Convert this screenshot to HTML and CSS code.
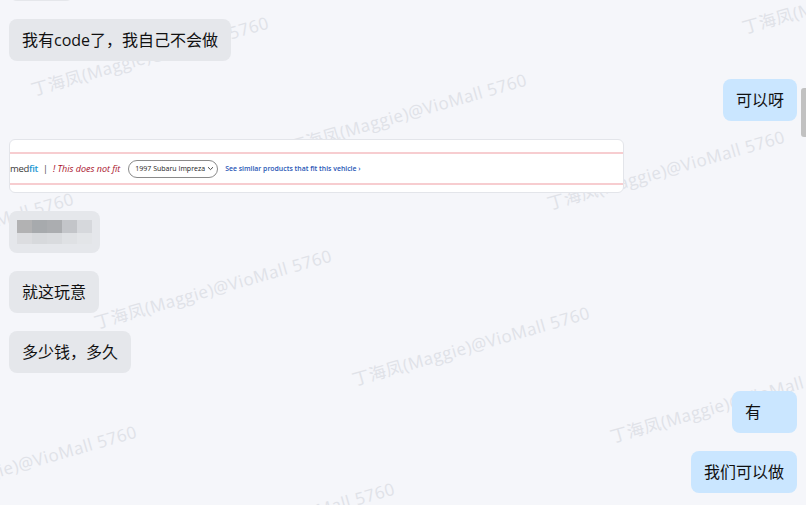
FILE: index.html
```html
<!DOCTYPE html>
<html lang="zh-CN">
<head>
    <meta charset="UTF-8">
    <meta name="viewport" content="width=device-width, initial-scale=1.0">
    <title>聊天记录</title>
    <link rel="stylesheet" href="styles.css">
</head>
<body>
    <div class="watermarks"></div>
    <div class="scroll-thumb"></div>
    <main class="chat">
        <div class="msg"><div class="bubble">嗯</div></div>
        <div class="msg"><div class="bubble">我有code了，我自己不会做</div></div>
        <div class="msg me"><div class="bubble">可以呀</div></div>
        <div class="msg">
            <div class="fit-card">
                <div class="fit-bar">
                    <span class="brand">med<b>fit</b></span>
                    <span class="sep">|</span>
                    <span class="warn">! This does not fit</span>
                    <span class="vehicle">1997 Subaru Impreza <svg width="7" height="5" viewBox="0 0 7 5"><path d="M1 1.2 L3.5 3.6 L6 1.2" fill="none" stroke="#333" stroke-width="0.9"/></svg></span>
                    <span class="similar">See similar products that fit this vehicle ›</span>
                </div>
            </div>
        </div>
        <div class="msg">
            <div class="bubble blurred">
                <div class="mosaic">
                    <i style="background:#b2b2b3"></i><i style="background:#a7aaad"></i><i style="background:#abadb0"></i><i style="background:#c3c5c9"></i><i style="background:#d6d8dc"></i>
                    <i style="background:#dcdde0"></i><i style="background:#d7d9dc"></i><i style="background:#d9dbde"></i><i style="background:#dfe1e4"></i><i style="background:#e3e5e8"></i>
                </div>
            </div>
        </div>
        <div class="msg"><div class="bubble">就这玩意</div></div>
        <div class="msg"><div class="bubble">多少钱，多久</div></div>
        <div class="msg me"><div class="bubble">有</div></div>
        <div class="msg me"><div class="bubble">我们可以做</div></div>
    </main>
    <script>
// Tiled watermark, same step as the chat client draws it
const layer = document.querySelector(".watermarks");
for (let r = -1; r <= 3; r++) {
    for (let c = -2; c <= 3; c++) {
        const x = 34 + 258 * c + 63 * r;
        const y = 97 + 57 * c + 233 * r;
        if (x > 806 || y < -60 || y > 600) continue;
        const mark = document.createElement("span");
        mark.className = "mark";
        mark.textContent = "丁海凤(Maggie)@VioMall 5760";
        mark.style.left = x + "px";
        mark.style.top = (y - 16) + "px";
        layer.appendChild(mark);
    }
}
    </script>
</body>
</html>
```

FILE: styles.css
```css
/* General */
body {
    margin: 0;
    height: 505px;
    overflow: hidden;
    position: relative;
    background-color: #f5f6fa;
    font-family: "Open Sans", "Noto Sans CJK SC", sans-serif;
    color: #111;
}

/* Watermark layer */
.watermarks {
    position: absolute;
    inset: 0;
    overflow: hidden;
    z-index: 0;
}

.mark {
    position: absolute;
    white-space: nowrap;
    font-family: "Open Sans", "Noto Sans CJK SC", sans-serif;
    font-size: 17px;
    line-height: 18px;
    letter-spacing: 0.5px;
    color: #e0e2e8;
    transform-origin: 0 100%;
    transform: rotate(-16deg);
}

.scroll-thumb {
    position: absolute;
    right: 0;
    top: 88px;
    width: 5px;
    height: 49px;
    background-color: #c1c1c1;
    border-radius: 3px 0 0 3px;
    z-index: 2;
}

/* Chat list */
.chat {
    position: relative;
    z-index: 1;
    display: flex;
    flex-direction: column;
    gap: 18px;
    padding: 0 9px;
    margin-top: -41px;
}

.msg {
    display: flex;
}

.msg.me {
    justify-content: flex-end;
}

.bubble {
    box-sizing: border-box;
    min-width: 65px;
    height: 42px;
    padding: 10px 13px;
    font-size: 16px;
    line-height: 22px;
    border-radius: 8px;
    background-color: #e5e7eb;
}

.me .bubble {
    background-color: #cae6ff;
}

.bubble.blurred {
    padding: 9px 8px 9px 8px;
}

.mosaic {
    display: grid;
    grid-template-columns: repeat(5, 15px);
    grid-template-rows: 13px 11px;
    width: 75px;
}

/* Pasted screenshot */
.fit-card {
    box-sizing: border-box;
    width: 615px;
    height: 54px;
    padding-top: 12px;
    background-color: #fff;
    border: 1px solid #e3e5ea;
    border-radius: 6px;
    overflow: hidden;
    font-family: "Open Sans", sans-serif;
}

.fit-bar {
    box-sizing: border-box;
    height: 33px;
    border-top: 2px solid #f7cdd0;
    border-bottom: 2px solid #f7cdd0;
    display: flex;
    align-items: center;
    white-space: nowrap;
}

.brand {
    font-size: 9.5px;
    color: #3a3a3a;
    letter-spacing: -0.3px;
}

.brand b {
    color: #1d98d3;
    font-weight: 600;
}

.sep {
    margin-left: 5px;
    font-size: 9px;
    color: #444;
}

.warn {
    margin-left: 5px;
    font-size: 9px;
    font-style: italic;
    color: #a80f2b;
}

.vehicle {
    margin-left: 8px;
    height: 16px;
    padding: 0 3px 0 6px;
    display: flex;
    align-items: center;
    gap: 2px;
    border: 1px solid #8a8a8a;
    border-radius: 9px;
    font-size: 7px;
    color: #222;
}

.similar {
    margin-left: 7px;
    font-size: 6.9px;
    font-weight: 600;
    color: #2755b5;
}
```
